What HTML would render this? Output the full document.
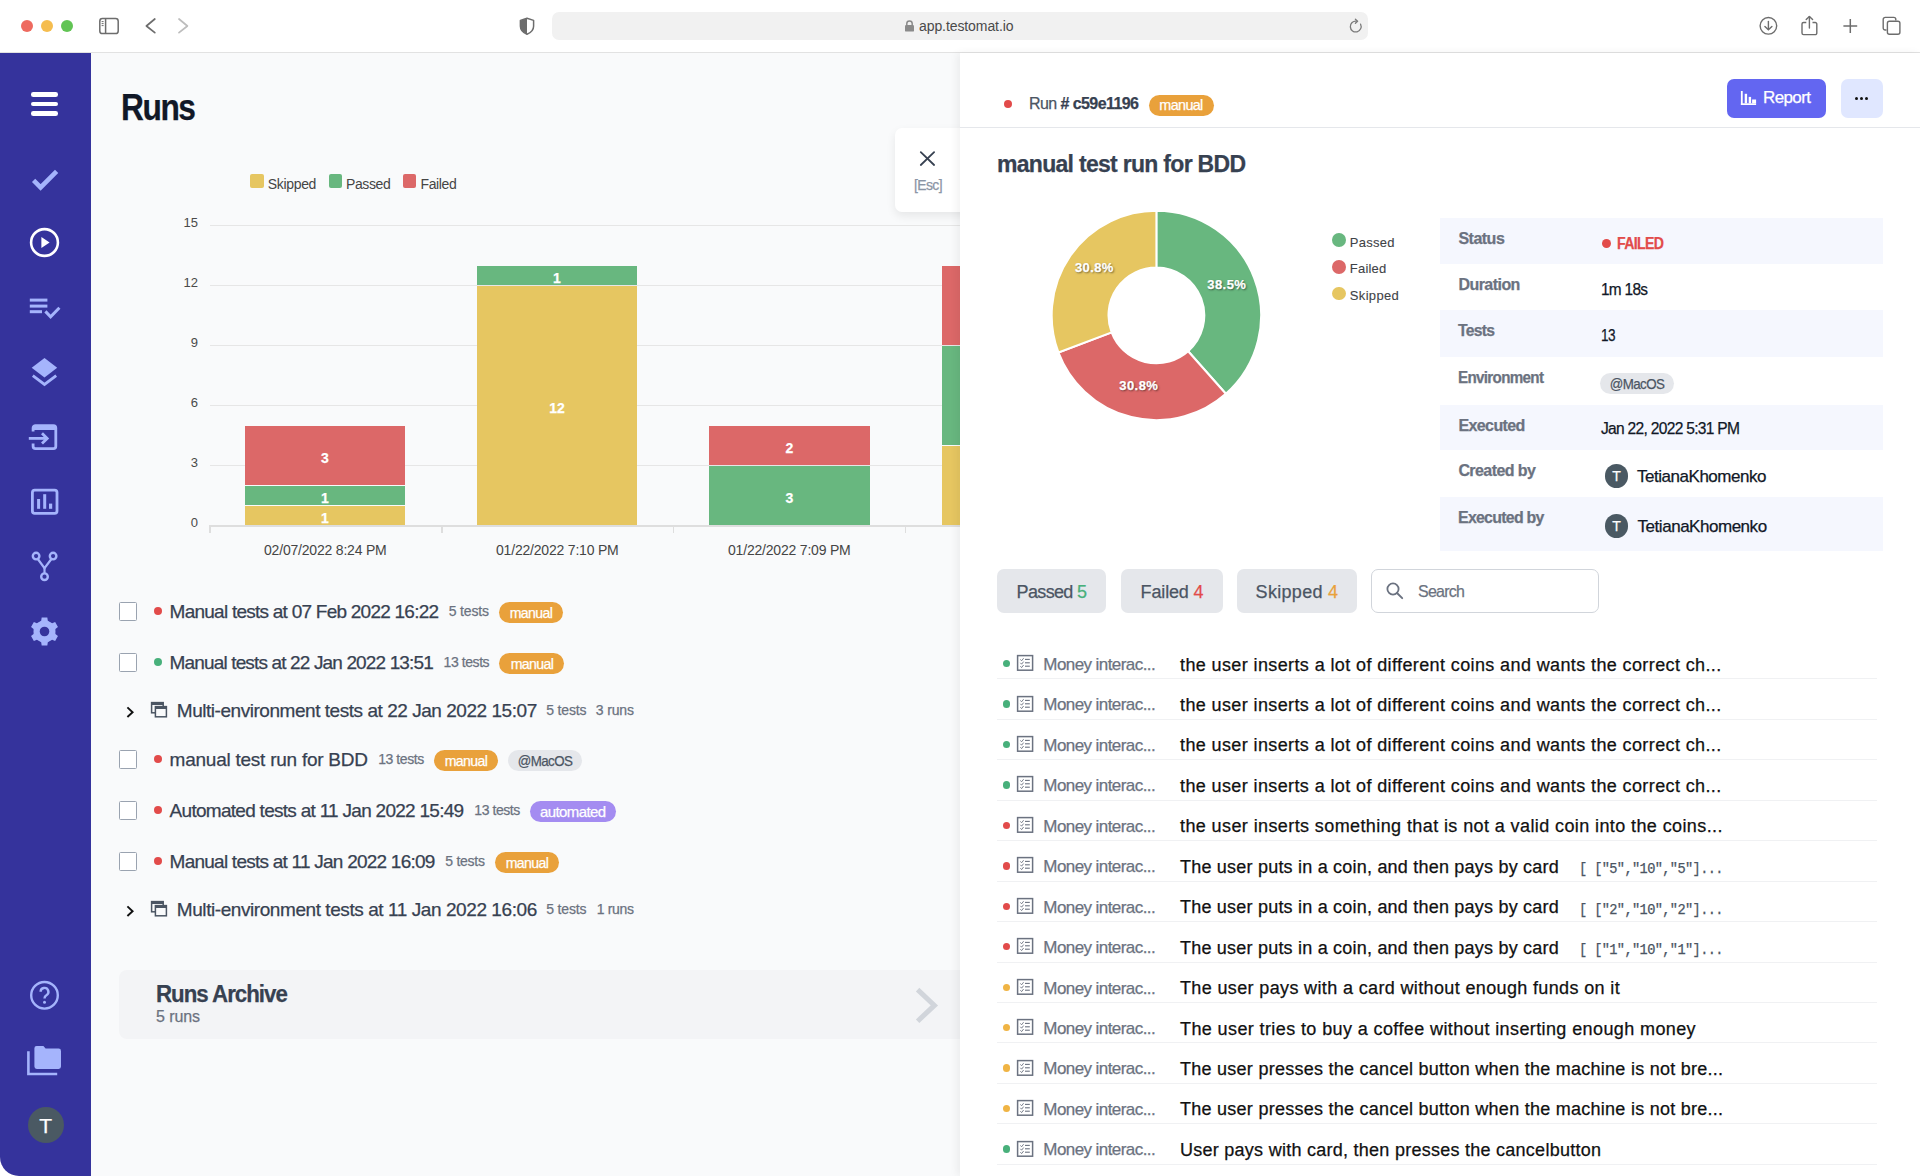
<!DOCTYPE html>
<html><head><meta charset="utf-8"><title>Runs</title>
<style>
*{box-sizing:border-box;margin:0;padding:0}
html,body{width:1920px;height:1176px;overflow:hidden;background:#fff;font-family:"Liberation Sans",sans-serif}
.abs{position:absolute}
.t{position:absolute;white-space:nowrap;line-height:1;-webkit-text-stroke:0.25px currentColor}
</style></head><body>
<div class="abs" style="left:0px;top:0px;width:1920px;height:52px;background:#ffffff;"></div>
<div class="abs" style="left:0px;top:52px;width:1920px;height:1px;background:#e2e2e2;"></div>
<div class="abs" style="left:21px;top:20px;width:12px;height:12px;border-radius:50%;background:#ee6a5f"></div>
<div class="abs" style="left:41px;top:20px;width:12px;height:12px;border-radius:50%;background:#f5bd4f"></div>
<div class="abs" style="left:61px;top:20px;width:12px;height:12px;border-radius:50%;background:#61c454"></div>
<svg class="abs" style="left:96px;top:15px;" width="26" height="22" viewBox="0 0 26 22"><rect x="3.8" y="3.6" width="18.4" height="15" rx="2.6" fill="none" stroke="#6d6d6d" stroke-width="1.5"/><line x1="9.6" y1="3.6" x2="9.6" y2="18.6" stroke="#6d6d6d" stroke-width="1.5"/><line x1="5.6" y1="6.6" x2="7.6" y2="6.6" stroke="#6d6d6d" stroke-width="1"/><line x1="5.6" y1="8.6" x2="7.6" y2="8.6" stroke="#6d6d6d" stroke-width="1"/><line x1="5.6" y1="10.6" x2="7.6" y2="10.6" stroke="#6d6d6d" stroke-width="1"/></svg>
<svg class="abs" style="left:140px;top:15px;" width="20" height="22" viewBox="0 0 20 22"><polyline points="14.8,4 6.4,11 14.8,17.7" fill="none" stroke="#6d6d6d" stroke-width="1.7" stroke-linecap="round" stroke-linejoin="round"/></svg>
<svg class="abs" style="left:173px;top:15px;" width="20" height="22" viewBox="0 0 20 22"><polyline points="6,4 14.4,11 6,17.7" fill="none" stroke="#bdbdbd" stroke-width="1.7" stroke-linecap="round" stroke-linejoin="round"/></svg>
<svg class="abs" style="left:516px;top:15px;" width="22" height="22" viewBox="0 0 22 22"><path d="M11 3.2 L17.6 5.4 V11.2 C17.6 15 14.8 17.6 11 19.2 C7.2 17.6 4.4 15 4.4 11.2 V5.4 Z" fill="none" stroke="#6d6d6d" stroke-width="1.5" stroke-linejoin="round"/><path d="M11 3.2 L4.4 5.4 V11.2 C4.4 15 7.2 17.6 11 19.2 Z" fill="#6d6d6d"/></svg>
<div class="abs" style="left:552px;top:12px;width:816px;height:28px;background:#f1f1f1;border-radius:7px"></div>
<svg class="abs" style="left:903px;top:19px;" width="13" height="14" viewBox="0 0 13 14"><rect x="2" y="6" width="9" height="6.6" rx="1.2" fill="#8a8a8a"/><path d="M3.8 6.4 V4.6 A2.7 2.7 0 0 1 9.2 4.6 V6.4" fill="none" stroke="#8a8a8a" stroke-width="1.5"/></svg>
<div class="t" style="letter-spacing:-0.088px;left:919px;top:19.10px;font-size:14px;color:#4a4a4a;font-weight:400;font-family:'Liberation Sans', sans-serif;-webkit-text-stroke:0">app.testomat.io</div>
<svg class="abs" style="left:1348px;top:18px;" width="17" height="17" viewBox="0 0 17 17"><path d="M12.6 6.2 A5.4 5.4 0 1 1 8.5 3.2" fill="none" stroke="#7a7a7a" stroke-width="1.3" stroke-linecap="round"/><polyline points="7.4,1.2 9.6,3.2 7.4,5.2" fill="none" stroke="#7a7a7a" stroke-width="1.3" stroke-linecap="round" stroke-linejoin="round"/></svg>
<svg class="abs" style="left:1757px;top:15px;" width="23" height="23" viewBox="0 0 23 23"><circle cx="11.4" cy="10.8" r="8.3" fill="none" stroke="#6d6d6d" stroke-width="1.4"/><line x1="11.4" y1="6.4" x2="11.4" y2="14.6" stroke="#6d6d6d" stroke-width="1.4" stroke-linecap="round"/><polyline points="7.9,11.4 11.4,14.8 14.9,11.4" fill="none" stroke="#6d6d6d" stroke-width="1.4" stroke-linecap="round" stroke-linejoin="round"/></svg>
<svg class="abs" style="left:1797px;top:12px;" width="24" height="26" viewBox="0 0 24 26"><path d="M9.3 10.5 H6.6 A1.6 1.6 0 0 0 5 12.1 V21 A1.6 1.6 0 0 0 6.6 22.6 H18.2 A1.6 1.6 0 0 0 19.8 21 V12.1 A1.6 1.6 0 0 0 18.2 10.5 H15.5" fill="none" stroke="#6d6d6d" stroke-width="1.4"/><line x1="12.4" y1="4.6" x2="12.4" y2="16" stroke="#6d6d6d" stroke-width="1.4" stroke-linecap="round"/><polyline points="9.2,7.6 12.4,4.4 15.6,7.6" fill="none" stroke="#6d6d6d" stroke-width="1.4" stroke-linecap="round" stroke-linejoin="round"/></svg>
<svg class="abs" style="left:1840px;top:16px;" width="21" height="21" viewBox="0 0 21 21"><line x1="10.3" y1="3" x2="10.3" y2="17" stroke="#6d6d6d" stroke-width="1.5"/><line x1="3.4" y1="10" x2="17.2" y2="10" stroke="#6d6d6d" stroke-width="1.5"/></svg>
<svg class="abs" style="left:1880px;top:14px;" width="24" height="24" viewBox="0 0 24 24"><path d="M6.5 16 H5.2 A2 2 0 0 1 3.2 14 V5.4 A2 2 0 0 1 5.2 3.4 H13.8 A2 2 0 0 1 15.8 5.4 V6.6" fill="none" stroke="#6d6d6d" stroke-width="1.4"/><rect x="7.4" y="7.2" width="12.5" height="13" rx="2" fill="none" stroke="#6d6d6d" stroke-width="1.4"/></svg>
<div class="abs" style="left:0px;top:53px;width:91px;height:1123px;background:#35339c;border-bottom-left-radius:19px"></div>
<div class="abs" style="left:31px;top:92.2px;width:27px;height:4.6px;background:#ffffff;border-radius:2.3px"></div>
<div class="abs" style="left:31px;top:101.7px;width:27px;height:4.6px;background:#ffffff;border-radius:2.3px"></div>
<div class="abs" style="left:31px;top:111.2px;width:27px;height:4.6px;background:#ffffff;border-radius:2.3px"></div>
<svg class="abs" style="left:28px;top:162px;" width="34" height="34" viewBox="0 0 34 34"><polyline points="5.6,18.4 12.6,25.4 28.6,9.4" fill="none" stroke="#a5b4fc" stroke-width="4.6"/></svg>
<svg class="abs" style="left:28px;top:226px;" width="34" height="34" viewBox="0 0 34 34"><circle cx="16.5" cy="16.5" r="13.4" fill="none" stroke="#ffffff" stroke-width="2.6"/><path d="M13.4 11 L21.6 16.5 L13.4 22 Z" fill="#ffffff"/></svg>
<svg class="abs" style="left:26px;top:292px;" width="38" height="32" viewBox="0 0 38 32"><rect x="3.8" y="6.6" width="17.6" height="3" fill="#a5b4fc"/><rect x="3.8" y="12.6" width="17.6" height="3" fill="#a5b4fc"/><rect x="3.8" y="18.2" width="12.2" height="3" fill="#a5b4fc"/><polyline points="19.4,19.4 24.6,24.8 33.4,15.8" fill="none" stroke="#a5b4fc" stroke-width="3"/></svg>
<svg class="abs" style="left:26px;top:352px;" width="38" height="38" viewBox="0 0 38 38"><path d="M18.5 5.9 L31.2 15.7 L18.5 25.6 L5.7 15.7 Z" fill="#a5b4fc"/><polyline points="6.8,23.6 18.5,32.4 30.2,23.6" fill="none" stroke="#a5b4fc" stroke-width="2.8"/></svg>
<svg class="abs" style="left:26px;top:418px;" width="38" height="38" viewBox="0 0 38 38"><path d="M7.1 13.4 V10 A2.4 2.4 0 0 1 9.5 7.6 H27.4 A2.4 2.4 0 0 1 29.8 10 V28.3 A2.4 2.4 0 0 1 27.4 30.7 H9.5 A2.4 2.4 0 0 1 7.1 28.3 V25.6" fill="none" stroke="#a5b4fc" stroke-width="2.8"/><rect x="7.1" y="7" width="22.7" height="5" fill="#a5b4fc"/><line x1="2.8" y1="20.4" x2="20.6" y2="20.4" stroke="#a5b4fc" stroke-width="2.8"/><polyline points="16,15.2 21.2,20.4 16,25.6" fill="none" stroke="#a5b4fc" stroke-width="2.8"/></svg>
<svg class="abs" style="left:26px;top:482px;" width="38" height="38" viewBox="0 0 38 38"><rect x="6.4" y="8.2" width="24.6" height="23.2" rx="2.4" fill="none" stroke="#a5b4fc" stroke-width="2.8"/><rect x="11.1" y="17" width="3" height="9.8" fill="#a5b4fc"/><rect x="17.2" y="12.2" width="3" height="14.6" fill="#a5b4fc"/><rect x="23" y="21.6" width="3.2" height="5.2" fill="#a5b4fc"/></svg>
<svg class="abs" style="left:26px;top:546px;" width="38" height="40" viewBox="0 0 38 40"><circle cx="10.1" cy="10.1" r="3.3" fill="none" stroke="#a5b4fc" stroke-width="2.4"/><circle cx="27.1" cy="10.1" r="3.3" fill="none" stroke="#a5b4fc" stroke-width="2.4"/><circle cx="18.5" cy="30.7" r="3.3" fill="none" stroke="#a5b4fc" stroke-width="2.4"/><polyline points="11.8,13 18.5,22.2 25.4,13" fill="none" stroke="#a5b4fc" stroke-width="2.2"/><line x1="18.5" y1="22" x2="18.5" y2="27.4" stroke="#a5b4fc" stroke-width="2.2"/></svg>
<svg class="abs" style="left:26px;top:612px;" width="38" height="40" viewBox="0 0 38 40"><polygon points="15.19,8.80 15.68,5.58 21.32,5.58 21.81,8.80 26.11,11.28 29.14,10.10 31.96,14.98 29.42,17.02 29.42,21.98 31.96,24.02 29.14,28.90 26.11,27.72 21.81,30.20 21.32,33.42 15.68,33.42 15.19,30.20 10.89,27.72 7.86,28.90 5.04,24.02 7.58,21.98 7.58,17.02 5.04,14.98 7.86,10.10 10.89,11.28" fill="#a5b4fc"/><circle cx="18.5" cy="19.5" r="10.6" fill="#a5b4fc"/><circle cx="18.5" cy="19.5" r="4.8" fill="#35339c"/></svg>
<svg class="abs" style="left:26px;top:976px;" width="38" height="38" viewBox="0 0 38 38"><circle cx="18.5" cy="19.3" r="13.3" fill="none" stroke="#a5b4fc" stroke-width="2.4"/><path d="M14.6 15.8 A3.9 3.9 0 1 1 20.4 19.2 C19 20 18.5 20.8 18.5 22.4" fill="none" stroke="#a5b4fc" stroke-width="2.4"/><circle cx="18.5" cy="26.2" r="1.5" fill="#a5b4fc"/></svg>
<svg class="abs" style="left:26px;top:1040px;" width="40" height="40" viewBox="0 0 40 40"><path d="M8.4 8.2 Q8.4 6 10.6 6 H17.4 L19.6 8.6 H32.6 Q35 8.6 35 11 V26.6 Q35 29 32.6 29 H10.8 Q8.4 29 8.4 26.6 Z" fill="#a5b4fc"/><polyline points="2.4,11.2 2.4,34 31.2,34" fill="none" stroke="#a5b4fc" stroke-width="2.6"/></svg>
<div class="abs" style="left:27.7px;top:1107px;width:36px;height:36px;border-radius:50%;background:#4a5963"></div>
<div class="t" style="left:45.7px;top:1114.65px;font-size:21px;color:#ffffff;font-weight:400;font-family:'Liberation Sans', sans-serif;transform:translateX(-50%);">T</div>
<div class="abs" style="left:91px;top:53px;width:869px;height:1123px;background:#f9fafb;"></div>
<div class="t" style="letter-spacing:-1.620px;transform:scaleX(0.8809);transform-origin:0 0;left:120.5px;top:89.80px;font-size:36px;color:#111827;font-weight:700;font-family:'Liberation Sans', sans-serif;">Runs</div>
<div class="abs" style="left:250.2px;top:174.4px;width:13.6px;height:13.6px;background:#e6c661;border-radius:2px"></div>
<div class="t" style="letter-spacing:-0.316px;left:267.7px;top:176.50px;font-size:14px;color:#454545;font-weight:400;font-family:'Liberation Sans', sans-serif;-webkit-text-stroke:0">Skipped</div>
<div class="abs" style="left:328.6px;top:174.4px;width:13.6px;height:13.6px;background:#68b77f;border-radius:2px"></div>
<div class="t" style="letter-spacing:-0.381px;left:346px;top:176.50px;font-size:14px;color:#454545;font-weight:400;font-family:'Liberation Sans', sans-serif;-webkit-text-stroke:0">Passed</div>
<div class="abs" style="left:402.8px;top:174.4px;width:13.6px;height:13.6px;background:#dc6868;border-radius:2px"></div>
<div class="t" style="letter-spacing:-0.388px;left:420.5px;top:176.50px;font-size:14px;color:#454545;font-weight:400;font-family:'Liberation Sans', sans-serif;-webkit-text-stroke:0">Failed</div>
<div class="abs" style="left:210px;top:225px;width:750px;height:1px;background:#e6e6e6;"></div>
<div class="abs" style="left:210px;top:285px;width:750px;height:1px;background:#e6e6e6;"></div>
<div class="abs" style="left:210px;top:345px;width:750px;height:1px;background:#e6e6e6;"></div>
<div class="abs" style="left:210px;top:405px;width:750px;height:1px;background:#e6e6e6;"></div>
<div class="abs" style="left:210px;top:465px;width:750px;height:1px;background:#e6e6e6;"></div>
<div class="t" style="right:1722px;top:216.25px;font-size:13px;color:#4a4a4a;font-weight:400;font-family:'Liberation Sans', sans-serif;-webkit-text-stroke:0">15</div>
<div class="t" style="right:1722px;top:276.25px;font-size:13px;color:#4a4a4a;font-weight:400;font-family:'Liberation Sans', sans-serif;-webkit-text-stroke:0">12</div>
<div class="t" style="right:1722px;top:336.25px;font-size:13px;color:#4a4a4a;font-weight:400;font-family:'Liberation Sans', sans-serif;-webkit-text-stroke:0">9</div>
<div class="t" style="right:1722px;top:396.25px;font-size:13px;color:#4a4a4a;font-weight:400;font-family:'Liberation Sans', sans-serif;-webkit-text-stroke:0">6</div>
<div class="t" style="right:1722px;top:456.25px;font-size:13px;color:#4a4a4a;font-weight:400;font-family:'Liberation Sans', sans-serif;-webkit-text-stroke:0">3</div>
<div class="t" style="right:1722px;top:516.25px;font-size:13px;color:#4a4a4a;font-weight:400;font-family:'Liberation Sans', sans-serif;-webkit-text-stroke:0">0</div>
<div class="abs" style="left:209px;top:525px;width:751px;height:1.6px;background:#dedede;"></div>
<div class="abs" style="left:209.4px;top:525px;width:1.2px;height:8px;background:#dedede;"></div>
<div class="abs" style="left:441.4px;top:525px;width:1.2px;height:8px;background:#dedede;"></div>
<div class="abs" style="left:673.2px;top:525px;width:1.2px;height:8px;background:#dedede;"></div>
<div class="abs" style="left:905.2px;top:525px;width:1.2px;height:8px;background:#dedede;"></div>
<div class="abs" style="left:245px;top:505.8px;width:160px;height:19.19999999999999px;background:#e6c661;"></div>
<div class="t" style="left:325.0px;top:511.10px;font-size:14px;color:#ffffff;font-weight:700;font-family:'Liberation Sans', sans-serif;transform:translateX(-50%);">1</div>
<div class="abs" style="left:245px;top:485.6px;width:160px;height:19.0px;background:#68b77f;"></div>
<div class="t" style="left:325.0px;top:490.80px;font-size:14px;color:#ffffff;font-weight:700;font-family:'Liberation Sans', sans-serif;transform:translateX(-50%);">1</div>
<div class="abs" style="left:245px;top:425.6px;width:160px;height:59.0px;background:#dc6868;"></div>
<div class="t" style="left:325.0px;top:450.80px;font-size:14px;color:#ffffff;font-weight:700;font-family:'Liberation Sans', sans-serif;transform:translateX(-50%);">3</div>
<div class="abs" style="left:477px;top:285.6px;width:160px;height:239.39999999999998px;background:#e6c661;"></div>
<div class="t" style="left:557.0px;top:401.00px;font-size:14px;color:#ffffff;font-weight:700;font-family:'Liberation Sans', sans-serif;transform:translateX(-50%);">12</div>
<div class="abs" style="left:477px;top:265.6px;width:160px;height:19.0px;background:#68b77f;"></div>
<div class="t" style="left:557.0px;top:270.80px;font-size:14px;color:#ffffff;font-weight:700;font-family:'Liberation Sans', sans-serif;transform:translateX(-50%);">1</div>
<div class="abs" style="left:709.2px;top:465.6px;width:160.5999999999999px;height:59.39999999999998px;background:#68b77f;"></div>
<div class="t" style="left:789.5px;top:491.00px;font-size:14px;color:#ffffff;font-weight:700;font-family:'Liberation Sans', sans-serif;transform:translateX(-50%);">3</div>
<div class="abs" style="left:709.2px;top:425.6px;width:160.5999999999999px;height:39.0px;background:#dc6868;"></div>
<div class="t" style="left:789.5px;top:440.80px;font-size:14px;color:#ffffff;font-weight:700;font-family:'Liberation Sans', sans-serif;transform:translateX(-50%);">2</div>
<div class="abs" style="left:942px;top:445.6px;width:18px;height:79.39999999999998px;background:#e6c661;"></div>
<div class="abs" style="left:942px;top:345.6px;width:18px;height:99.0px;background:#68b77f;"></div>
<div class="abs" style="left:942px;top:265.6px;width:18px;height:79.0px;background:#dc6868;"></div>
<div class="t" style="letter-spacing:-0.195px;left:325.3px;top:542.50px;font-size:14px;color:#454545;font-weight:400;font-family:'Liberation Sans', sans-serif;transform:translateX(-50%);-webkit-text-stroke:0">02/07/2022 8:24 PM</div>
<div class="t" style="letter-spacing:-0.195px;left:557.3px;top:542.50px;font-size:14px;color:#454545;font-weight:400;font-family:'Liberation Sans', sans-serif;transform:translateX(-50%);-webkit-text-stroke:0">01/22/2022 7:10 PM</div>
<div class="t" style="letter-spacing:-0.195px;left:789.3px;top:542.50px;font-size:14px;color:#454545;font-weight:400;font-family:'Liberation Sans', sans-serif;transform:translateX(-50%);-webkit-text-stroke:0">01/22/2022 7:09 PM</div>
<div class="abs" style="left:895px;top:128px;width:80px;height:84px;background:#fff;border-radius:7px;box-shadow:0 4px 10px rgba(0,0,0,0.08)"></div>
<svg class="abs" style="left:917px;top:148px;" width="21" height="21" viewBox="0 0 21 21"><line x1="3.8" y1="4.2" x2="17.1" y2="17" stroke="#374151" stroke-width="1.8" stroke-linecap="round"/><line x1="17.1" y1="4.2" x2="3.8" y2="17" stroke="#374151" stroke-width="1.8" stroke-linecap="round"/></svg>
<div class="t" style="letter-spacing:-0.630px;left:927.7px;top:177.90px;font-size:14px;color:#8b95a5;font-weight:400;font-family:'Liberation Sans', sans-serif;transform:translateX(-50%) scaleX(0.9963);">[Esc]</div>
<div class="abs" style="left:119px;top:602.4px;width:18.2px;height:18.4px;background:#ffffff;border:1.3px solid #9aa3b0;border-radius:1.5px"></div>
<div class="abs" style="left:153.5px;top:607.3px;width:8.2px;height:8.2px;border-radius:50%;background:#e24b4a"></div>
<div class="t" style="letter-spacing:-0.755px;left:169.6px;top:602.15px;font-size:19px;color:#374151;font-weight:400;font-family:'Liberation Sans', sans-serif;">Manual tests at 07 Feb 2022 16:22</div>
<div class="t" style="letter-spacing:-0.175px;left:448.8px;top:604.10px;font-size:14px;color:#6b7280;font-weight:400;font-family:'Liberation Sans', sans-serif;">5 tests</div>
<div class="abs" style="left:498.8px;top:601.9px;width:64.19999999999999px;height:21px;border-radius:10.5px;background:#e9a13b"></div>
<div class="t" style="letter-spacing:-0.675px;left:530.9px;top:604.65px;font-size:15px;color:#fff;font-weight:500;font-family:'Liberation Sans', sans-serif;transform:translateX(-50%) scaleX(0.9427);">manual</div>
<div class="abs" style="left:119px;top:653.4px;width:18.2px;height:18.4px;background:#ffffff;border:1.3px solid #9aa3b0;border-radius:1.5px"></div>
<div class="abs" style="left:153.5px;top:658.3px;width:8.2px;height:8.2px;border-radius:50%;background:#48b07b"></div>
<div class="t" style="letter-spacing:-0.855px;left:169.6px;top:653.15px;font-size:19px;color:#374151;font-weight:400;font-family:'Liberation Sans', sans-serif;">Manual tests at 22 Jan 2022 13:51</div>
<div class="t" style="letter-spacing:-0.433px;left:443.6px;top:655.10px;font-size:14px;color:#6b7280;font-weight:400;font-family:'Liberation Sans', sans-serif;">13 tests</div>
<div class="abs" style="left:499.4px;top:652.9px;width:64.30000000000007px;height:21px;border-radius:10.5px;background:#e9a13b"></div>
<div class="t" style="letter-spacing:-0.675px;left:531.55px;top:655.65px;font-size:15px;color:#fff;font-weight:500;font-family:'Liberation Sans', sans-serif;transform:translateX(-50%) scaleX(0.9448);">manual</div>
<svg class="abs" style="left:123px;top:703.5px;" width="14" height="16" viewBox="0 0 14 16"><polyline points="4.4,3.4 9.6,8.2 4.4,13" fill="none" stroke="#111" stroke-width="1.9"/></svg>
<svg class="abs" style="left:150px;top:700.5px;" width="20" height="20" viewBox="0 0 20 20"><rect x="1.6" y="1.6" width="11.6" height="10.2" fill="none" stroke="#4b5563" stroke-width="1.5"/><rect x="1.6" y="1.6" width="11.6" height="2.4" fill="#4b5563"/><rect x="5.4" y="5.6" width="11" height="10.2" fill="#f9fafb" stroke="#4b5563" stroke-width="1.5"/><rect x="5.4" y="5.6" width="11" height="2.4" fill="#4b5563"/></svg>
<div class="t" style="letter-spacing:-0.461px;left:176.8px;top:700.95px;font-size:19px;color:#374151;font-weight:400;font-family:'Liberation Sans', sans-serif;">Multi-environment tests at 22 Jan 2022 15:07</div>
<div class="t" style="letter-spacing:-0.142px;left:546.2px;top:703.20px;font-size:14px;color:#6b7280;font-weight:400;font-family:'Liberation Sans', sans-serif;">5 tests</div>
<div class="t" style="letter-spacing:-0.144px;left:595.8px;top:703.20px;font-size:14px;color:#6b7280;font-weight:400;font-family:'Liberation Sans', sans-serif;">3 runs</div>
<div class="abs" style="left:119px;top:750.4px;width:18.2px;height:18.4px;background:#ffffff;border:1.3px solid #9aa3b0;border-radius:1.5px"></div>
<div class="abs" style="left:153.5px;top:755.3px;width:8.2px;height:8.2px;border-radius:50%;background:#e24b4a"></div>
<div class="t" style="letter-spacing:-0.246px;left:169.6px;top:750.15px;font-size:19px;color:#374151;font-weight:400;font-family:'Liberation Sans', sans-serif;">manual test run for BDD</div>
<div class="t" style="letter-spacing:-0.433px;left:378.2px;top:752.10px;font-size:14px;color:#6b7280;font-weight:400;font-family:'Liberation Sans', sans-serif;">13 tests</div>
<div class="abs" style="left:433.6px;top:749.9px;width:64.19999999999999px;height:21px;border-radius:10.5px;background:#e9a13b"></div>
<div class="t" style="letter-spacing:-0.675px;left:465.70000000000005px;top:752.65px;font-size:15px;color:#fff;font-weight:500;font-family:'Liberation Sans', sans-serif;transform:translateX(-50%) scaleX(0.9427);">manual</div>
<div class="abs" style="left:507.6px;top:749.9px;width:74.10000000000002px;height:21px;border-radius:10.5px;background:#e5e7eb"></div>
<div class="t" style="letter-spacing:-0.675px;left:544.6500000000001px;top:752.65px;font-size:15px;color:#4b5563;font-weight:400;font-family:'Liberation Sans', sans-serif;transform:translateX(-50%) scaleX(0.8889);">@MacOS</div>
<div class="abs" style="left:119px;top:801.4px;width:18.2px;height:18.4px;background:#ffffff;border:1.3px solid #9aa3b0;border-radius:1.5px"></div>
<div class="abs" style="left:153.5px;top:806.3px;width:8.2px;height:8.2px;border-radius:50%;background:#e24b4a"></div>
<div class="t" style="letter-spacing:-0.718px;left:169.6px;top:801.15px;font-size:19px;color:#374151;font-weight:400;font-family:'Liberation Sans', sans-serif;">Automated tests at 11 Jan 2022 15:49</div>
<div class="t" style="letter-spacing:-0.433px;left:474.3px;top:803.10px;font-size:14px;color:#6b7280;font-weight:400;font-family:'Liberation Sans', sans-serif;">13 tests</div>
<div class="abs" style="left:529.6px;top:800.9px;width:86.39999999999998px;height:21px;border-radius:10.5px;background:#a48cf1"></div>
<div class="t" style="letter-spacing:-0.611px;left:572.8px;top:803.65px;font-size:15px;color:#fff;font-weight:500;font-family:'Liberation Sans', sans-serif;transform:translateX(-50%);">automated</div>
<div class="abs" style="left:119px;top:852.4px;width:18.2px;height:18.4px;background:#ffffff;border:1.3px solid #9aa3b0;border-radius:1.5px"></div>
<div class="abs" style="left:153.5px;top:857.3px;width:8.2px;height:8.2px;border-radius:50%;background:#e24b4a"></div>
<div class="t" style="letter-spacing:-0.761px;left:169.6px;top:852.15px;font-size:19px;color:#374151;font-weight:400;font-family:'Liberation Sans', sans-serif;">Manual tests at 11 Jan 2022 16:09</div>
<div class="t" style="letter-spacing:-0.242px;left:445.2px;top:854.10px;font-size:14px;color:#6b7280;font-weight:400;font-family:'Liberation Sans', sans-serif;">5 tests</div>
<div class="abs" style="left:494.8px;top:851.9px;width:64.19999999999999px;height:21px;border-radius:10.5px;background:#e9a13b"></div>
<div class="t" style="letter-spacing:-0.675px;left:526.9px;top:854.65px;font-size:15px;color:#fff;font-weight:500;font-family:'Liberation Sans', sans-serif;transform:translateX(-50%) scaleX(0.9427);">manual</div>
<svg class="abs" style="left:123px;top:902.5px;" width="14" height="16" viewBox="0 0 14 16"><polyline points="4.4,3.4 9.6,8.2 4.4,13" fill="none" stroke="#111" stroke-width="1.9"/></svg>
<svg class="abs" style="left:150px;top:899.5px;" width="20" height="20" viewBox="0 0 20 20"><rect x="1.6" y="1.6" width="11.6" height="10.2" fill="none" stroke="#4b5563" stroke-width="1.5"/><rect x="1.6" y="1.6" width="11.6" height="2.4" fill="#4b5563"/><rect x="5.4" y="5.6" width="11" height="10.2" fill="#f9fafb" stroke="#4b5563" stroke-width="1.5"/><rect x="5.4" y="5.6" width="11" height="2.4" fill="#4b5563"/></svg>
<div class="t" style="letter-spacing:-0.428px;left:176.8px;top:899.95px;font-size:19px;color:#374151;font-weight:400;font-family:'Liberation Sans', sans-serif;">Multi-environment tests at 11 Jan 2022 16:06</div>
<div class="t" style="letter-spacing:-0.142px;left:546.2px;top:902.20px;font-size:14px;color:#6b7280;font-weight:400;font-family:'Liberation Sans', sans-serif;">5 tests</div>
<div class="t" style="letter-spacing:-0.324px;left:596.7px;top:902.20px;font-size:14px;color:#6b7280;font-weight:400;font-family:'Liberation Sans', sans-serif;">1 runs</div>
<div class="abs" style="left:119px;top:970px;width:860px;height:69px;background:#f3f4f6;border-radius:8px"></div>
<div class="t" style="letter-spacing:-1.035px;transform:scaleX(0.9689);transform-origin:0 0;left:156.4px;top:983.45px;font-size:23px;color:#374151;font-weight:700;font-family:'Liberation Sans', sans-serif;">Runs Archive</div>
<div class="t" style="letter-spacing:-0.094px;left:156px;top:1008.90px;font-size:16px;color:#6b7280;font-weight:400;font-family:'Liberation Sans', sans-serif;">5 runs</div>
<svg class="abs" style="left:910px;top:982px;" width="32" height="46" viewBox="0 0 32 46"><polyline points="7.6,7.6 24.4,23.4 7.6,39.2" fill="none" stroke="#d1d5db" stroke-width="5"/></svg>
<div class="abs" style="left:960px;top:53px;width:960px;height:1123px;background:#fff;box-shadow:-3px 0 8px rgba(0,0,0,0.06)"></div>
<div class="abs" style="left:960px;top:127px;width:960px;height:1px;background:#e5e7eb;"></div>
<div class="abs" style="left:1003.8px;top:99.8px;width:8.4px;height:8.4px;border-radius:50%;background:#e24b4a"></div>
<div class="t" style="letter-spacing:-0.573px;left:1029px;top:96.00px;font-size:16px;color:#4b5563;font-weight:400;font-family:'Liberation Sans', sans-serif;">Run <b style="color:#374151">#&nbsp;c59e1196</b></div>
<div class="abs" style="left:1148.7px;top:94.5px;width:65.09999999999991px;height:21px;border-radius:10.5px;background:#e9a13b"></div>
<div class="t" style="letter-spacing:-0.675px;left:1181.25px;top:97.25px;font-size:15px;color:#fff;font-weight:500;font-family:'Liberation Sans', sans-serif;transform:translateX(-50%) scaleX(0.9601);">manual</div>
<div class="abs" style="left:1727px;top:78.5px;width:99px;height:39.5px;background:#6366f1;border-radius:7px"></div>
<svg class="abs" style="left:1739px;top:88px;" width="20" height="20" viewBox="0 0 20 20"><rect x="1.9" y="3" width="1.8" height="14" fill="#fff"/><rect x="1.9" y="15.3" width="15.2" height="1.7" fill="#fff"/><rect x="5.7" y="5.8" width="2.4" height="9.6" fill="#fff"/><rect x="9.7" y="8.9" width="2.4" height="6.5" fill="#fff"/><rect x="13.1" y="11.5" width="4" height="3.9" fill="#fff"/></svg>
<div class="t" style="letter-spacing:-0.606px;left:1763px;top:89.15px;font-size:17px;color:#ffffff;font-weight:500;font-family:'Liberation Sans', sans-serif;">Report</div>
<div class="abs" style="left:1840.5px;top:78.5px;width:42.5px;height:39.5px;background:#e0e7ff;border-radius:7px"></div>
<div class="abs" style="left:1854.6px;top:96.5px;width:3.4px;height:3.4px;border-radius:50%;background:#111111"></div>
<div class="abs" style="left:1859.7px;top:96.5px;width:3.4px;height:3.4px;border-radius:50%;background:#111111"></div>
<div class="abs" style="left:1864.8px;top:96.5px;width:3.4px;height:3.4px;border-radius:50%;background:#111111"></div>
<div class="t" style="letter-spacing:-0.706px;left:997px;top:152.65px;font-size:23px;color:#374151;font-weight:700;font-family:'Liberation Sans', sans-serif;">manual test run for BDD</div>
<svg class="abs" style="left:0;top:0" width="1920" height="1176" viewBox="0 0 1920 1176"><path d="M1156.40 210.70 A104.7 104.7 0 0 1 1225.83 393.77 L1188.16 351.25 A47.9 47.9 0 0 0 1156.40 267.50 Z" fill="#68b77f" stroke="#fff" stroke-width="2"/><path d="M1225.83 393.77 A104.7 104.7 0 0 1 1058.50 352.53 L1111.61 332.39 A47.9 47.9 0 0 0 1188.16 351.25 Z" fill="#dc6868" stroke="#fff" stroke-width="2"/><path d="M1058.50 352.53 A104.7 104.7 0 0 1 1156.40 210.70 L1156.40 267.50 A47.9 47.9 0 0 0 1111.61 332.39 Z" fill="#e6c661" stroke="#fff" stroke-width="2"/></svg>
<div class="t" style="letter-spacing:0.406px;left:1226.8px;top:277.95px;font-size:13px;color:#ffffff;font-weight:700;font-family:'Liberation Sans', sans-serif;transform:translateX(-50%);text-shadow:1px 1px 2px rgba(0,0,0,0.55)">38.5%</div>
<div class="t" style="letter-spacing:0.406px;left:1138.8px;top:378.95px;font-size:13px;color:#ffffff;font-weight:700;font-family:'Liberation Sans', sans-serif;transform:translateX(-50%);text-shadow:1px 1px 2px rgba(0,0,0,0.55)">30.8%</div>
<div class="t" style="letter-spacing:0.406px;left:1094.4px;top:260.95px;font-size:13px;color:#ffffff;font-weight:700;font-family:'Liberation Sans', sans-serif;transform:translateX(-50%);text-shadow:1px 1px 2px rgba(0,0,0,0.55)">30.8%</div>
<div class="abs" style="left:1331.8999999999999px;top:233.29999999999998px;width:13.8px;height:13.8px;border-radius:50%;background:#68b77f"></div>
<div class="t" style="letter-spacing:0.245px;left:1349.8px;top:235.65px;font-size:13px;color:#3f4347;font-weight:400;font-family:'Liberation Sans', sans-serif;-webkit-text-stroke:0.1px currentColor">Passed</div>
<div class="abs" style="left:1331.8999999999999px;top:259.90000000000003px;width:13.8px;height:13.8px;border-radius:50%;background:#dc6868"></div>
<div class="t" style="letter-spacing:0.216px;left:1349.8px;top:262.25px;font-size:13px;color:#3f4347;font-weight:400;font-family:'Liberation Sans', sans-serif;-webkit-text-stroke:0.1px currentColor">Failed</div>
<div class="abs" style="left:1331.8999999999999px;top:286.5px;width:13.8px;height:13.8px;border-radius:50%;background:#e6c661"></div>
<div class="t" style="letter-spacing:0.336px;left:1349.8px;top:288.85px;font-size:13px;color:#3f4347;font-weight:400;font-family:'Liberation Sans', sans-serif;-webkit-text-stroke:0.1px currentColor">Skipped</div>
<div class="abs" style="left:1440px;top:218px;width:443px;height:46px;background:#f5f7fe;"></div>
<div class="t" style="letter-spacing:-0.501px;left:1458.4px;top:231.00px;font-size:16px;color:#6b7280;font-weight:600;font-family:'Liberation Sans', sans-serif;">Status</div>
<div class="t" style="letter-spacing:-0.540px;left:1458.4px;top:277.00px;font-size:16px;color:#6b7280;font-weight:600;font-family:'Liberation Sans', sans-serif;">Duration</div>
<div class="abs" style="left:1440px;top:310px;width:443px;height:47px;background:#f5f7fe;"></div>
<div class="t" style="letter-spacing:-0.720px;transform:scaleX(0.9807);transform-origin:0 0;left:1458.4px;top:323.00px;font-size:16px;color:#6b7280;font-weight:600;font-family:'Liberation Sans', sans-serif;">Tests</div>
<div class="t" style="letter-spacing:-0.720px;transform:scaleX(0.9493);transform-origin:0 0;left:1458.4px;top:370.00px;font-size:16px;color:#6b7280;font-weight:600;font-family:'Liberation Sans', sans-serif;">Environment</div>
<div class="abs" style="left:1440px;top:405px;width:443px;height:45px;background:#f5f7fe;"></div>
<div class="t" style="letter-spacing:-0.592px;left:1458.4px;top:418.00px;font-size:16px;color:#6b7280;font-weight:600;font-family:'Liberation Sans', sans-serif;">Executed</div>
<div class="t" style="letter-spacing:-0.578px;left:1458.4px;top:463.00px;font-size:16px;color:#6b7280;font-weight:600;font-family:'Liberation Sans', sans-serif;">Created by</div>
<div class="abs" style="left:1440px;top:497px;width:443px;height:54px;background:#f5f7fe;"></div>
<div class="t" style="letter-spacing:-0.720px;transform:scaleX(0.9924);transform-origin:0 0;left:1458.4px;top:510.00px;font-size:16px;color:#6b7280;font-weight:600;font-family:'Liberation Sans', sans-serif;">Executed by</div>
<div class="abs" style="left:1601.8000000000002px;top:238.6px;width:9.2px;height:9.2px;border-radius:50%;background:#e24b4a"></div>
<div class="t" style="letter-spacing:-0.720px;transform:scaleX(0.8820);transform-origin:0 0;left:1617.2px;top:236.00px;font-size:16px;color:#e24b4a;font-weight:700;font-family:'Liberation Sans', sans-serif;">FAILED</div>
<div class="t" style="letter-spacing:-0.720px;transform:scaleX(0.9618);transform-origin:0 0;left:1600.6px;top:281.70px;font-size:16px;color:#111827;font-weight:400;font-family:'Liberation Sans', sans-serif;">1m 18s</div>
<div class="t" style="letter-spacing:-0.720px;transform:scaleX(0.8491);transform-origin:0 0;left:1600.6px;top:327.70px;font-size:16px;color:#111827;font-weight:400;font-family:'Liberation Sans', sans-serif;">13</div>
<div class="abs" style="left:1600px;top:373.0px;width:73.59999999999991px;height:21px;border-radius:10.5px;background:#e5e7eb"></div>
<div class="t" style="letter-spacing:-0.675px;left:1636.8px;top:375.75px;font-size:15px;color:#4b5563;font-weight:400;font-family:'Liberation Sans', sans-serif;transform:translateX(-50%) scaleX(0.8889);">@MacOS</div>
<div class="t" style="letter-spacing:-0.720px;transform:scaleX(0.9728);transform-origin:0 0;left:1600.6px;top:421.00px;font-size:16px;color:#111827;font-weight:400;font-family:'Liberation Sans', sans-serif;">Jan 22, 2022 5:31 PM</div>
<div class="abs" style="left:1604.9px;top:464.4px;width:23.2px;height:23.2px;border-radius:50%;background:#4a5963"></div>
<div class="t" style="left:1616.5px;top:469.10px;font-size:14px;color:#ffffff;font-weight:400;font-family:'Liberation Sans', sans-serif;transform:translateX(-50%);">T</div>
<div class="t" style="letter-spacing:-0.471px;left:1637px;top:467.85px;font-size:17px;color:#111827;font-weight:400;font-family:'Liberation Sans', sans-serif;">TetianaKhomenko</div>
<div class="abs" style="left:1604.9px;top:514.4px;width:23.2px;height:23.2px;border-radius:50%;background:#4a5963"></div>
<div class="t" style="left:1616.5px;top:519.10px;font-size:14px;color:#ffffff;font-weight:400;font-family:'Liberation Sans', sans-serif;transform:translateX(-50%);">T</div>
<div class="t" style="letter-spacing:-0.471px;left:1637.6px;top:517.85px;font-size:17px;color:#111827;font-weight:400;font-family:'Liberation Sans', sans-serif;">TetianaKhomenko</div>
<div class="abs" style="left:997px;top:569px;width:109px;height:44.3px;background:#e5e7eb;border-radius:7px"></div>
<div class="t" style="letter-spacing:-0.652px;left:1051.5px;top:583.40px;font-size:18px;color:#4b5563;font-weight:400;font-family:'Liberation Sans', sans-serif;transform:translateX(-50%);">Passed <span style="color:#48b07b">5</span></div>
<div class="abs" style="left:1121px;top:569px;width:102px;height:44.3px;background:#e5e7eb;border-radius:7px"></div>
<div class="t" style="letter-spacing:-0.150px;left:1172.0px;top:583.40px;font-size:18px;color:#4b5563;font-weight:400;font-family:'Liberation Sans', sans-serif;transform:translateX(-50%);">Failed <span style="color:#e24b4a">4</span></div>
<div class="abs" style="left:1237px;top:569px;width:120px;height:44.3px;background:#e5e7eb;border-radius:7px"></div>
<div class="t" style="letter-spacing:0.303px;left:1297.0px;top:583.40px;font-size:18px;color:#4b5563;font-weight:400;font-family:'Liberation Sans', sans-serif;transform:translateX(-50%);">Skipped <span style="color:#e9a13b">4</span></div>
<div class="abs" style="left:1371px;top:569px;width:228.3px;height:44.3px;border-radius:7px;background:#fff;border:1.3px solid #d1d5db"></div>
<svg class="abs" style="left:1383px;top:579px;" width="24" height="24" viewBox="0 0 24 24"><circle cx="10" cy="10" r="5.6" fill="none" stroke="#6b7280" stroke-width="1.8"/><line x1="14" y1="14" x2="19.2" y2="19.2" stroke="#6b7280" stroke-width="1.9" stroke-linecap="round"/></svg>
<div class="t" style="letter-spacing:-0.765px;transform:scaleX(0.9391);transform-origin:0 0;left:1417.8px;top:583.15px;font-size:17px;color:#6b7280;font-weight:400;font-family:'Liberation Sans', sans-serif;">Search</div>
<div class="abs" style="left:1003.0px;top:659.9px;width:7.4px;height:7.4px;border-radius:50%;background:#48b07b"></div>
<svg class="abs" style="left:1016px;top:654.1px;" width="19" height="19" viewBox="0 0 19 19"><rect x="1.6" y="1.6" width="15" height="14.6" fill="none" stroke="#6b7280" stroke-width="1.5"/><polyline points="4.4,5.4 5.6,6.8 7.6,4.2" fill="none" stroke="#6b7280" stroke-width="0.9"/><line x1="9" y1="5.4" x2="13.8" y2="5.4" stroke="#6b7280" stroke-width="1.1"/><polyline points="4.4,8.8 5.6,10.2 7.6,7.6" fill="none" stroke="#6b7280" stroke-width="0.9"/><line x1="9" y1="8.8" x2="13.8" y2="8.8" stroke="#6b7280" stroke-width="1.1"/><polyline points="4.4,12.2 5.6,13.6 7.6,11.0" fill="none" stroke="#6b7280" stroke-width="0.9"/><line x1="9" y1="12.2" x2="13.8" y2="12.2" stroke="#6b7280" stroke-width="1.1"/></svg>
<div class="t" style="letter-spacing:-0.570px;left:1043.3px;top:655.95px;font-size:17px;color:#6b7280;font-weight:400;font-family:'Liberation Sans', sans-serif;">Money interac...</div>
<div class="t" style="letter-spacing:0.387px;left:1180px;top:655.50px;font-size:18px;color:#111111;font-weight:400;font-family:'Liberation Sans', sans-serif;">the user inserts a lot of different coins and wants the correct ch...</div>
<div class="abs" style="left:997px;top:678.4px;width:880px;height:1px;background:#f0f1f3;"></div>
<div class="abs" style="left:1003.0px;top:700.35px;width:7.4px;height:7.4px;border-radius:50%;background:#48b07b"></div>
<svg class="abs" style="left:1016px;top:694.5500000000001px;" width="19" height="19" viewBox="0 0 19 19"><rect x="1.6" y="1.6" width="15" height="14.6" fill="none" stroke="#6b7280" stroke-width="1.5"/><polyline points="4.4,5.4 5.6,6.8 7.6,4.2" fill="none" stroke="#6b7280" stroke-width="0.9"/><line x1="9" y1="5.4" x2="13.8" y2="5.4" stroke="#6b7280" stroke-width="1.1"/><polyline points="4.4,8.8 5.6,10.2 7.6,7.6" fill="none" stroke="#6b7280" stroke-width="0.9"/><line x1="9" y1="8.8" x2="13.8" y2="8.8" stroke="#6b7280" stroke-width="1.1"/><polyline points="4.4,12.2 5.6,13.6 7.6,11.0" fill="none" stroke="#6b7280" stroke-width="0.9"/><line x1="9" y1="12.2" x2="13.8" y2="12.2" stroke="#6b7280" stroke-width="1.1"/></svg>
<div class="t" style="letter-spacing:-0.570px;left:1043.3px;top:696.40px;font-size:17px;color:#6b7280;font-weight:400;font-family:'Liberation Sans', sans-serif;">Money interac...</div>
<div class="t" style="letter-spacing:0.387px;left:1180px;top:695.95px;font-size:18px;color:#111111;font-weight:400;font-family:'Liberation Sans', sans-serif;">the user inserts a lot of different coins and wants the correct ch...</div>
<div class="abs" style="left:997px;top:718.85px;width:880px;height:1px;background:#f0f1f3;"></div>
<div class="abs" style="left:1003.0px;top:740.8px;width:7.4px;height:7.4px;border-radius:50%;background:#48b07b"></div>
<svg class="abs" style="left:1016px;top:735.0px;" width="19" height="19" viewBox="0 0 19 19"><rect x="1.6" y="1.6" width="15" height="14.6" fill="none" stroke="#6b7280" stroke-width="1.5"/><polyline points="4.4,5.4 5.6,6.8 7.6,4.2" fill="none" stroke="#6b7280" stroke-width="0.9"/><line x1="9" y1="5.4" x2="13.8" y2="5.4" stroke="#6b7280" stroke-width="1.1"/><polyline points="4.4,8.8 5.6,10.2 7.6,7.6" fill="none" stroke="#6b7280" stroke-width="0.9"/><line x1="9" y1="8.8" x2="13.8" y2="8.8" stroke="#6b7280" stroke-width="1.1"/><polyline points="4.4,12.2 5.6,13.6 7.6,11.0" fill="none" stroke="#6b7280" stroke-width="0.9"/><line x1="9" y1="12.2" x2="13.8" y2="12.2" stroke="#6b7280" stroke-width="1.1"/></svg>
<div class="t" style="letter-spacing:-0.570px;left:1043.3px;top:736.85px;font-size:17px;color:#6b7280;font-weight:400;font-family:'Liberation Sans', sans-serif;">Money interac...</div>
<div class="t" style="letter-spacing:0.387px;left:1180px;top:736.40px;font-size:18px;color:#111111;font-weight:400;font-family:'Liberation Sans', sans-serif;">the user inserts a lot of different coins and wants the correct ch...</div>
<div class="abs" style="left:997px;top:759.3px;width:880px;height:1px;background:#f0f1f3;"></div>
<div class="abs" style="left:1003.0px;top:781.25px;width:7.4px;height:7.4px;border-radius:50%;background:#48b07b"></div>
<svg class="abs" style="left:1016px;top:775.45px;" width="19" height="19" viewBox="0 0 19 19"><rect x="1.6" y="1.6" width="15" height="14.6" fill="none" stroke="#6b7280" stroke-width="1.5"/><polyline points="4.4,5.4 5.6,6.8 7.6,4.2" fill="none" stroke="#6b7280" stroke-width="0.9"/><line x1="9" y1="5.4" x2="13.8" y2="5.4" stroke="#6b7280" stroke-width="1.1"/><polyline points="4.4,8.8 5.6,10.2 7.6,7.6" fill="none" stroke="#6b7280" stroke-width="0.9"/><line x1="9" y1="8.8" x2="13.8" y2="8.8" stroke="#6b7280" stroke-width="1.1"/><polyline points="4.4,12.2 5.6,13.6 7.6,11.0" fill="none" stroke="#6b7280" stroke-width="0.9"/><line x1="9" y1="12.2" x2="13.8" y2="12.2" stroke="#6b7280" stroke-width="1.1"/></svg>
<div class="t" style="letter-spacing:-0.570px;left:1043.3px;top:777.30px;font-size:17px;color:#6b7280;font-weight:400;font-family:'Liberation Sans', sans-serif;">Money interac...</div>
<div class="t" style="letter-spacing:0.387px;left:1180px;top:776.85px;font-size:18px;color:#111111;font-weight:400;font-family:'Liberation Sans', sans-serif;">the user inserts a lot of different coins and wants the correct ch...</div>
<div class="abs" style="left:997px;top:799.75px;width:880px;height:1px;background:#f0f1f3;"></div>
<div class="abs" style="left:1003.0px;top:821.7px;width:7.4px;height:7.4px;border-radius:50%;background:#e24b4a"></div>
<svg class="abs" style="left:1016px;top:815.9000000000001px;" width="19" height="19" viewBox="0 0 19 19"><rect x="1.6" y="1.6" width="15" height="14.6" fill="none" stroke="#6b7280" stroke-width="1.5"/><polyline points="4.4,5.4 5.6,6.8 7.6,4.2" fill="none" stroke="#6b7280" stroke-width="0.9"/><line x1="9" y1="5.4" x2="13.8" y2="5.4" stroke="#6b7280" stroke-width="1.1"/><polyline points="4.4,8.8 5.6,10.2 7.6,7.6" fill="none" stroke="#6b7280" stroke-width="0.9"/><line x1="9" y1="8.8" x2="13.8" y2="8.8" stroke="#6b7280" stroke-width="1.1"/><polyline points="4.4,12.2 5.6,13.6 7.6,11.0" fill="none" stroke="#6b7280" stroke-width="0.9"/><line x1="9" y1="12.2" x2="13.8" y2="12.2" stroke="#6b7280" stroke-width="1.1"/></svg>
<div class="t" style="letter-spacing:-0.570px;left:1043.3px;top:817.75px;font-size:17px;color:#6b7280;font-weight:400;font-family:'Liberation Sans', sans-serif;">Money interac...</div>
<div class="t" style="letter-spacing:0.400px;left:1180px;top:817.30px;font-size:18px;color:#111111;font-weight:400;font-family:'Liberation Sans', sans-serif;">the user inserts something that is not a valid coin into the coins...</div>
<div class="abs" style="left:997px;top:840.2px;width:880px;height:1px;background:#f0f1f3;"></div>
<div class="abs" style="left:1003.0px;top:862.15px;width:7.4px;height:7.4px;border-radius:50%;background:#e24b4a"></div>
<svg class="abs" style="left:1016px;top:856.35px;" width="19" height="19" viewBox="0 0 19 19"><rect x="1.6" y="1.6" width="15" height="14.6" fill="none" stroke="#6b7280" stroke-width="1.5"/><polyline points="4.4,5.4 5.6,6.8 7.6,4.2" fill="none" stroke="#6b7280" stroke-width="0.9"/><line x1="9" y1="5.4" x2="13.8" y2="5.4" stroke="#6b7280" stroke-width="1.1"/><polyline points="4.4,8.8 5.6,10.2 7.6,7.6" fill="none" stroke="#6b7280" stroke-width="0.9"/><line x1="9" y1="8.8" x2="13.8" y2="8.8" stroke="#6b7280" stroke-width="1.1"/><polyline points="4.4,12.2 5.6,13.6 7.6,11.0" fill="none" stroke="#6b7280" stroke-width="0.9"/><line x1="9" y1="12.2" x2="13.8" y2="12.2" stroke="#6b7280" stroke-width="1.1"/></svg>
<div class="t" style="letter-spacing:-0.570px;left:1043.3px;top:858.20px;font-size:17px;color:#6b7280;font-weight:400;font-family:'Liberation Sans', sans-serif;">Money interac...</div>
<div class="t" style="letter-spacing:0.211px;left:1180px;top:857.75px;font-size:18px;color:#111111;font-weight:400;font-family:'Liberation Sans', sans-serif;">The user puts in a coin, and then pays by card</div>
<div class="t" style="letter-spacing:-0.630px;transform:scaleX(0.9744);transform-origin:0 0;left:1578.8px;top:862.21px;font-size:14px;color:#4b5563;font-weight:400;font-family:'Liberation Mono', monospace;">[ [&quot;5&quot;,&quot;10&quot;,&quot;5&quot;]...</div>
<div class="abs" style="left:997px;top:880.65px;width:880px;height:1px;background:#f0f1f3;"></div>
<div class="abs" style="left:1003.0px;top:902.6px;width:7.4px;height:7.4px;border-radius:50%;background:#e24b4a"></div>
<svg class="abs" style="left:1016px;top:896.8000000000001px;" width="19" height="19" viewBox="0 0 19 19"><rect x="1.6" y="1.6" width="15" height="14.6" fill="none" stroke="#6b7280" stroke-width="1.5"/><polyline points="4.4,5.4 5.6,6.8 7.6,4.2" fill="none" stroke="#6b7280" stroke-width="0.9"/><line x1="9" y1="5.4" x2="13.8" y2="5.4" stroke="#6b7280" stroke-width="1.1"/><polyline points="4.4,8.8 5.6,10.2 7.6,7.6" fill="none" stroke="#6b7280" stroke-width="0.9"/><line x1="9" y1="8.8" x2="13.8" y2="8.8" stroke="#6b7280" stroke-width="1.1"/><polyline points="4.4,12.2 5.6,13.6 7.6,11.0" fill="none" stroke="#6b7280" stroke-width="0.9"/><line x1="9" y1="12.2" x2="13.8" y2="12.2" stroke="#6b7280" stroke-width="1.1"/></svg>
<div class="t" style="letter-spacing:-0.570px;left:1043.3px;top:898.65px;font-size:17px;color:#6b7280;font-weight:400;font-family:'Liberation Sans', sans-serif;">Money interac...</div>
<div class="t" style="letter-spacing:0.211px;left:1180px;top:898.20px;font-size:18px;color:#111111;font-weight:400;font-family:'Liberation Sans', sans-serif;">The user puts in a coin, and then pays by card</div>
<div class="t" style="letter-spacing:-0.630px;transform:scaleX(0.9744);transform-origin:0 0;left:1578.8px;top:902.66px;font-size:14px;color:#4b5563;font-weight:400;font-family:'Liberation Mono', monospace;">[ [&quot;2&quot;,&quot;10&quot;,&quot;2&quot;]...</div>
<div class="abs" style="left:997px;top:921.1px;width:880px;height:1px;background:#f0f1f3;"></div>
<div class="abs" style="left:1003.0px;top:943.05px;width:7.4px;height:7.4px;border-radius:50%;background:#e24b4a"></div>
<svg class="abs" style="left:1016px;top:937.25px;" width="19" height="19" viewBox="0 0 19 19"><rect x="1.6" y="1.6" width="15" height="14.6" fill="none" stroke="#6b7280" stroke-width="1.5"/><polyline points="4.4,5.4 5.6,6.8 7.6,4.2" fill="none" stroke="#6b7280" stroke-width="0.9"/><line x1="9" y1="5.4" x2="13.8" y2="5.4" stroke="#6b7280" stroke-width="1.1"/><polyline points="4.4,8.8 5.6,10.2 7.6,7.6" fill="none" stroke="#6b7280" stroke-width="0.9"/><line x1="9" y1="8.8" x2="13.8" y2="8.8" stroke="#6b7280" stroke-width="1.1"/><polyline points="4.4,12.2 5.6,13.6 7.6,11.0" fill="none" stroke="#6b7280" stroke-width="0.9"/><line x1="9" y1="12.2" x2="13.8" y2="12.2" stroke="#6b7280" stroke-width="1.1"/></svg>
<div class="t" style="letter-spacing:-0.570px;left:1043.3px;top:939.10px;font-size:17px;color:#6b7280;font-weight:400;font-family:'Liberation Sans', sans-serif;">Money interac...</div>
<div class="t" style="letter-spacing:0.211px;left:1180px;top:938.65px;font-size:18px;color:#111111;font-weight:400;font-family:'Liberation Sans', sans-serif;">The user puts in a coin, and then pays by card</div>
<div class="t" style="letter-spacing:-0.630px;transform:scaleX(0.9744);transform-origin:0 0;left:1578.8px;top:943.11px;font-size:14px;color:#4b5563;font-weight:400;font-family:'Liberation Mono', monospace;">[ [&quot;1&quot;,&quot;10&quot;,&quot;1&quot;]...</div>
<div class="abs" style="left:997px;top:961.55px;width:880px;height:1px;background:#f0f1f3;"></div>
<div class="abs" style="left:1003.0px;top:983.5px;width:7.4px;height:7.4px;border-radius:50%;background:#f0b444"></div>
<svg class="abs" style="left:1016px;top:977.7px;" width="19" height="19" viewBox="0 0 19 19"><rect x="1.6" y="1.6" width="15" height="14.6" fill="none" stroke="#6b7280" stroke-width="1.5"/><polyline points="4.4,5.4 5.6,6.8 7.6,4.2" fill="none" stroke="#6b7280" stroke-width="0.9"/><line x1="9" y1="5.4" x2="13.8" y2="5.4" stroke="#6b7280" stroke-width="1.1"/><polyline points="4.4,8.8 5.6,10.2 7.6,7.6" fill="none" stroke="#6b7280" stroke-width="0.9"/><line x1="9" y1="8.8" x2="13.8" y2="8.8" stroke="#6b7280" stroke-width="1.1"/><polyline points="4.4,12.2 5.6,13.6 7.6,11.0" fill="none" stroke="#6b7280" stroke-width="0.9"/><line x1="9" y1="12.2" x2="13.8" y2="12.2" stroke="#6b7280" stroke-width="1.1"/></svg>
<div class="t" style="letter-spacing:-0.570px;left:1043.3px;top:979.55px;font-size:17px;color:#6b7280;font-weight:400;font-family:'Liberation Sans', sans-serif;">Money interac...</div>
<div class="t" style="letter-spacing:0.361px;left:1180px;top:979.10px;font-size:18px;color:#111111;font-weight:400;font-family:'Liberation Sans', sans-serif;">The user pays with a card without enough funds on it</div>
<div class="abs" style="left:997px;top:1002.0px;width:880px;height:1px;background:#f0f1f3;"></div>
<div class="abs" style="left:1003.0px;top:1023.95px;width:7.4px;height:7.4px;border-radius:50%;background:#f0b444"></div>
<svg class="abs" style="left:1016px;top:1018.1500000000001px;" width="19" height="19" viewBox="0 0 19 19"><rect x="1.6" y="1.6" width="15" height="14.6" fill="none" stroke="#6b7280" stroke-width="1.5"/><polyline points="4.4,5.4 5.6,6.8 7.6,4.2" fill="none" stroke="#6b7280" stroke-width="0.9"/><line x1="9" y1="5.4" x2="13.8" y2="5.4" stroke="#6b7280" stroke-width="1.1"/><polyline points="4.4,8.8 5.6,10.2 7.6,7.6" fill="none" stroke="#6b7280" stroke-width="0.9"/><line x1="9" y1="8.8" x2="13.8" y2="8.8" stroke="#6b7280" stroke-width="1.1"/><polyline points="4.4,12.2 5.6,13.6 7.6,11.0" fill="none" stroke="#6b7280" stroke-width="0.9"/><line x1="9" y1="12.2" x2="13.8" y2="12.2" stroke="#6b7280" stroke-width="1.1"/></svg>
<div class="t" style="letter-spacing:-0.570px;left:1043.3px;top:1020.00px;font-size:17px;color:#6b7280;font-weight:400;font-family:'Liberation Sans', sans-serif;">Money interac...</div>
<div class="t" style="letter-spacing:0.394px;left:1180px;top:1019.55px;font-size:18px;color:#111111;font-weight:400;font-family:'Liberation Sans', sans-serif;">The user tries to buy a coffee without inserting enough money</div>
<div class="abs" style="left:997px;top:1042.45px;width:880px;height:1px;background:#f0f1f3;"></div>
<div class="abs" style="left:1003.0px;top:1064.3999999999999px;width:7.4px;height:7.4px;border-radius:50%;background:#f0b444"></div>
<svg class="abs" style="left:1016px;top:1058.6px;" width="19" height="19" viewBox="0 0 19 19"><rect x="1.6" y="1.6" width="15" height="14.6" fill="none" stroke="#6b7280" stroke-width="1.5"/><polyline points="4.4,5.4 5.6,6.8 7.6,4.2" fill="none" stroke="#6b7280" stroke-width="0.9"/><line x1="9" y1="5.4" x2="13.8" y2="5.4" stroke="#6b7280" stroke-width="1.1"/><polyline points="4.4,8.8 5.6,10.2 7.6,7.6" fill="none" stroke="#6b7280" stroke-width="0.9"/><line x1="9" y1="8.8" x2="13.8" y2="8.8" stroke="#6b7280" stroke-width="1.1"/><polyline points="4.4,12.2 5.6,13.6 7.6,11.0" fill="none" stroke="#6b7280" stroke-width="0.9"/><line x1="9" y1="12.2" x2="13.8" y2="12.2" stroke="#6b7280" stroke-width="1.1"/></svg>
<div class="t" style="letter-spacing:-0.570px;left:1043.3px;top:1060.45px;font-size:17px;color:#6b7280;font-weight:400;font-family:'Liberation Sans', sans-serif;">Money interac...</div>
<div class="t" style="letter-spacing:0.262px;left:1180px;top:1060.00px;font-size:18px;color:#111111;font-weight:400;font-family:'Liberation Sans', sans-serif;">The user presses the cancel button when the machine is not bre...</div>
<div class="abs" style="left:997px;top:1082.8999999999999px;width:880px;height:1px;background:#f0f1f3;"></div>
<div class="abs" style="left:1003.0px;top:1104.8500000000001px;width:7.4px;height:7.4px;border-radius:50%;background:#f0b444"></div>
<svg class="abs" style="left:1016px;top:1099.0500000000002px;" width="19" height="19" viewBox="0 0 19 19"><rect x="1.6" y="1.6" width="15" height="14.6" fill="none" stroke="#6b7280" stroke-width="1.5"/><polyline points="4.4,5.4 5.6,6.8 7.6,4.2" fill="none" stroke="#6b7280" stroke-width="0.9"/><line x1="9" y1="5.4" x2="13.8" y2="5.4" stroke="#6b7280" stroke-width="1.1"/><polyline points="4.4,8.8 5.6,10.2 7.6,7.6" fill="none" stroke="#6b7280" stroke-width="0.9"/><line x1="9" y1="8.8" x2="13.8" y2="8.8" stroke="#6b7280" stroke-width="1.1"/><polyline points="4.4,12.2 5.6,13.6 7.6,11.0" fill="none" stroke="#6b7280" stroke-width="0.9"/><line x1="9" y1="12.2" x2="13.8" y2="12.2" stroke="#6b7280" stroke-width="1.1"/></svg>
<div class="t" style="letter-spacing:-0.570px;left:1043.3px;top:1100.90px;font-size:17px;color:#6b7280;font-weight:400;font-family:'Liberation Sans', sans-serif;">Money interac...</div>
<div class="t" style="letter-spacing:0.262px;left:1180px;top:1100.45px;font-size:18px;color:#111111;font-weight:400;font-family:'Liberation Sans', sans-serif;">The user presses the cancel button when the machine is not bre...</div>
<div class="abs" style="left:997px;top:1123.3500000000001px;width:880px;height:1px;background:#f0f1f3;"></div>
<div class="abs" style="left:1003.0px;top:1145.3px;width:7.4px;height:7.4px;border-radius:50%;background:#48b07b"></div>
<svg class="abs" style="left:1016px;top:1139.5px;" width="19" height="19" viewBox="0 0 19 19"><rect x="1.6" y="1.6" width="15" height="14.6" fill="none" stroke="#6b7280" stroke-width="1.5"/><polyline points="4.4,5.4 5.6,6.8 7.6,4.2" fill="none" stroke="#6b7280" stroke-width="0.9"/><line x1="9" y1="5.4" x2="13.8" y2="5.4" stroke="#6b7280" stroke-width="1.1"/><polyline points="4.4,8.8 5.6,10.2 7.6,7.6" fill="none" stroke="#6b7280" stroke-width="0.9"/><line x1="9" y1="8.8" x2="13.8" y2="8.8" stroke="#6b7280" stroke-width="1.1"/><polyline points="4.4,12.2 5.6,13.6 7.6,11.0" fill="none" stroke="#6b7280" stroke-width="0.9"/><line x1="9" y1="12.2" x2="13.8" y2="12.2" stroke="#6b7280" stroke-width="1.1"/></svg>
<div class="t" style="letter-spacing:-0.570px;left:1043.3px;top:1141.35px;font-size:17px;color:#6b7280;font-weight:400;font-family:'Liberation Sans', sans-serif;">Money interac...</div>
<div class="t" style="letter-spacing:0.261px;left:1180px;top:1140.90px;font-size:18px;color:#111111;font-weight:400;font-family:'Liberation Sans', sans-serif;">User pays with card, then presses the cancelbutton</div>
<div class="abs" style="left:997px;top:1163.8px;width:880px;height:1px;background:#f0f1f3;"></div>
</body></html>
